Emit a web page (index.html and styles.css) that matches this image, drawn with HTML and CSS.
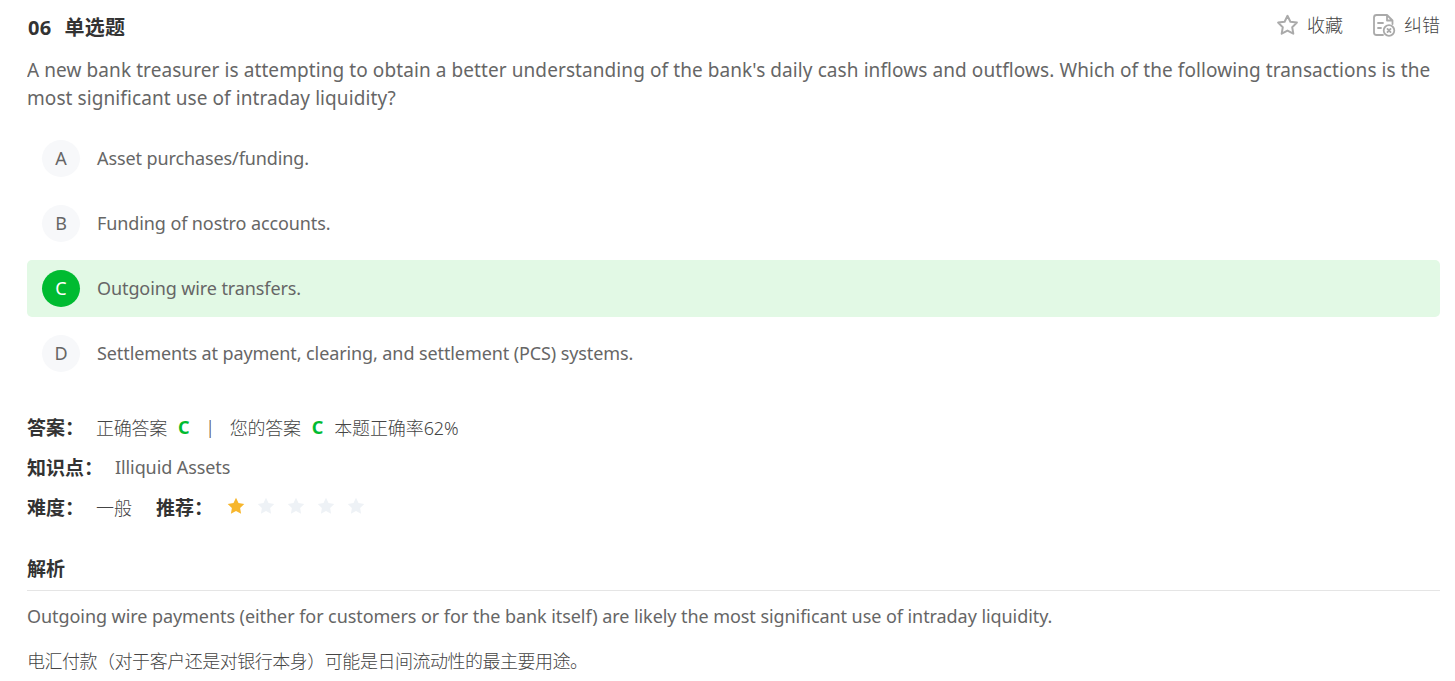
FILE: index.html
```html
<!DOCTYPE html>
<html lang="zh-CN">
<head>
    <meta charset="UTF-8">
    <meta name="viewport" content="width=device-width, initial-scale=1.0">
    <title>单选题</title>
    <link rel="stylesheet" href="styles.css">
</head>
<body>
    <div class="question">
        <div class="header">
            <h1 class="title"><span class="number">06</span>单选题</h1>
            <div class="tools">
                <a class="tool">
                    <svg class="tool-icon" width="24" height="24" viewBox="0 0 24 24" fill="none" stroke="#aaa" stroke-width="2" stroke-linejoin="round">
                        <path d="M12.500 2.800l2.900 5.900 6.500.9-4.700 4.600 1.100 6.500-5.800-3.100-5.800 3.100 1.100-6.500-4.700-4.600 6.500-.9z"/>
                    </svg>
                    <span>收藏</span>
                </a>
                <a class="tool">
                    <svg class="tool-icon" width="24" height="24" viewBox="0 0 24 24" fill="none" stroke="#aaa" stroke-width="1.8" stroke-linecap="round" stroke-linejoin="round">
                        <path d="M11 22H4.500a2.500 2.500 0 0 1-2.500-2.500v-15A2.500 2.500 0 0 1 4.500 2H15l5.500 5.500V11M15 2v5.500h5.500M6 10h5M6 15h3"/>
                        <circle cx="17" cy="17.500" r="5.300"/>
                        <path d="M15.500 16l3 3m0-3l-3 3"/>
                    </svg>
                    <span>纠错</span>
                </a>
            </div>
        </div>
        <p class="stem"><span class="line">A new bank treasurer is attempting to obtain a better understanding of the bank's daily cash inflows and outflows. Which of the following transactions is the</span> <span class="line">most significant use of intraday liquidity?</span></p>

        <ul class="options">
            <li class="option"><span class="letter">A</span><span>Asset purchases/funding.</span></li>
            <li class="option"><span class="letter">B</span><span>Funding of nostro accounts.</span></li>
            <li class="option correct"><span class="letter">C</span><span>Outgoing wire transfers.</span></li>
            <li class="option"><span class="letter">D</span><span>Settlements at payment, clearing, and settlement (PCS) systems.</span></li>
        </ul>

        <div class="info">
            <div class="row answer">
                <b class="label">答案：</b>
                <span>正确答案</span><b class="key">C</b><span class="divider">|</span><span>您的答案</span><b class="key">C</b><span class="rate">本题正确率62%</span>
            </div>
            <div class="row">
                <b class="label">知识点：</b>
                <span class="topic">Illiquid Assets</span>
            </div>
            <div class="row">
                <b class="label">难度：</b>
                <span class="level">一般</span>
                <b class="label">推荐：</b>
                <div class="stars">
                    <svg class="star on" viewBox="0 0 18 18"><path d="M9 .8l2.500 5.300 5.800.8-4.200 4 1 5.800L9 13.900l-5.100 2.800 1-5.800-4.200-4 5.800-.8z"/></svg>
                    <svg class="star" viewBox="0 0 18 18"><path d="M9 .8l2.500 5.300 5.800.8-4.200 4 1 5.800L9 13.900l-5.100 2.800 1-5.800-4.200-4 5.800-.8z"/></svg>
                    <svg class="star" viewBox="0 0 18 18"><path d="M9 .8l2.500 5.300 5.800.8-4.200 4 1 5.800L9 13.900l-5.100 2.800 1-5.800-4.200-4 5.800-.8z"/></svg>
                    <svg class="star" viewBox="0 0 18 18"><path d="M9 .8l2.500 5.300 5.800.8-4.200 4 1 5.800L9 13.900l-5.100 2.800 1-5.800-4.200-4 5.800-.8z"/></svg>
                    <svg class="star" viewBox="0 0 18 18"><path d="M9 .8l2.500 5.300 5.800.8-4.200 4 1 5.800L9 13.900l-5.100 2.800 1-5.800-4.200-4 5.800-.8z"/></svg>
                </div>
            </div>
        </div>

        <h2 class="analysis-title">解析</h2>
        <p class="analysis">Outgoing wire payments (either for customers or for the bank itself) are likely the most significant use of intraday liquidity.</p>
        <p class="analysis zh">电汇付款（对于客户还是对银行本身）可能是日间流动性的最主要用途。</p>
    </div>
</body>
</html>
```
FILE: styles.css
```css
body {
    margin: 0;
    background: #fff;
    color: #666;
    font-family: "Noto Sans", "Noto Sans CJK SC", sans-serif;
    font-size: 18px;
}
.question {
    width: 1413px;
    height: 681px;
    margin-left: 27px;
    overflow: hidden;
}
.header {
    display: flex;
    justify-content: space-between;
    height: 56px;
}
.title {
    margin: 13px 0 0 1px;
    font-size: 20px;
    line-height: 30px;
    letter-spacing: 0.3px;
    color: #333;
}
.number {
    margin-right: 13px;
}
.tools {
    display: flex;
    gap: 29px;
    height: 47px;
    font-weight: 300;
    color: #444;
}
.tool {
    display: flex;
    align-items: center;
    gap: 8px;
}
.tool-icon {
    margin-top: 2px;
}
.stem {
    margin: 0;
    font-size: 19px;
    line-height: 28px;
    letter-spacing: 0.085px;
}
.line {
    display: block;
    white-space: nowrap;
}
.options {
    margin: 18px 0 0;
    padding: 0;
    list-style: none;
    display: flex;
    flex-direction: column;
    gap: 8px;
    letter-spacing: -0.1px;
}
.option {
    display: flex;
    align-items: center;
    gap: 17px;
    height: 56px;
    padding: 0 0 1px 15px;
    line-height: 26px;
    border-radius: 5px;
}
.letter {
    width: 38px;
    height: 37px;
    line-height: 36px;
    border-radius: 50%;
    background: #f7f8fa;
    text-align: center;
}
.correct {
    background: #e2f9e5;
}
.correct .letter {
    background: #00bb31;
    color: #fff;
}
.info {
    margin-top: 25px;
}
.row {
    display: flex;
    align-items: center;
    height: 40.5px;
    white-space: nowrap;
}
.answer {
    height: 39.5px;
    letter-spacing: -0.25px;
    font-weight: 300;
    color: #444;
}
.label {
    color: #333;
    font-size: 19px;
    font-weight: 700;
    letter-spacing: 0;
    margin-right: 12px;
}
.answer .label {
    margin-top: 1px;
}
.key {
    color: #00bb31;
    font-weight: 700;
    margin: 0 10px 0 11px;
}
.divider {
    margin: 0 15px 0 6px;
}
.rate {
    margin-left: 1px;
    letter-spacing: -0.1px;
}
.topic {
    letter-spacing: -0.1px;
}
.level {
    margin-right: 24px;
    font-weight: 300;
    color: #444;
}
.stars {
    display: flex;
    gap: 12px;
    margin: -2px 0 0 2px;
}
.star {
    width: 18px;
    height: 18px;
    fill: #eef2f6;
}
.on {
    fill: #f7b62c;
}
.analysis-title {
    margin: 22px 0 0;
    height: 38px;
    padding-top: 2px;
    border-bottom: 1px solid #e5e5e5;
    font-size: 19px;
    line-height: 34px;
    color: #333;
}
.analysis {
    margin: 11px 0 0;
    line-height: 28px;
    letter-spacing: -0.065px;
    white-space: nowrap;
}
.zh {
    margin-top: 17px;
    letter-spacing: -0.48px;
    font-weight: 300;
    color: #444;
}
```
